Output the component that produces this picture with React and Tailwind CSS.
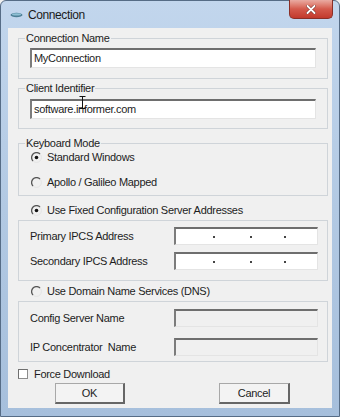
import React from "react";

function Radio({ checked }) {
  return (
    <svg width="11" height="11" viewBox="0 0 11 11" className="shrink-0">
      <path d="M9 2 A4.95 4.95 0 0 1 2 9" fill="none" stroke="#e4e4e4" strokeWidth="1" />
      <path d="M2 9 A4.95 4.95 0 0 1 9 2" fill="none" stroke="#555" strokeWidth="1.3" />
      {checked ? <circle cx="5.5" cy="5.5" r="1.8" fill="#111" /> : null}
    </svg>
  );
}

function Field({ className = "", children }) {
  return (
    <div
      className={`relative flex items-center border-t-2 border-l-2 border-r border-b border-t-[#6e6e6e] border-l-[#7c7c7c] border-r-[#e4e4e4] border-b-[#e4e4e4] ${className}`}
    >
      {children}
    </div>
  );
}

function IpField() {
  return (
    <Field className="h-[18px] w-[144px] bg-white">
      <div className="ml-[37px] h-[2px] w-[2px] bg-[#444]" />
      <div className="ml-[35px] h-[2px] w-[2px] bg-[#444]" />
      <div className="ml-[32px] h-[2px] w-[2px] bg-[#444]" />
    </Field>
  );
}

function Button({ className = "", children }) {
  return (
    <div
      className={`flex h-[21px] items-center justify-center border border-[#a8a8a8] border-r-2 border-b-2 border-r-[#666] border-b-[#666] bg-[#f3f3f3] ${className}`}
    >
      {children}
    </div>
  );
}

export default function App() {
  return (
    <div className="h-[417px] w-[340px] overflow-hidden bg-[#f0f0f0] font-['Liberation_Sans',Arial,sans-serif] text-[11px] leading-[13px] tracking-[-0.3px] text-[#1d1d1d]">
      <div className="flex h-full flex-col rounded-t-[6px] border border-[#566c86] bg-gradient-to-b from-[#c2d6ed] via-[#b2c9e3] to-[#a6bfdc] px-[7px] pb-[8px]">
        {/* title bar */}
        <div className="flex h-[27px] shrink-0">
          <div className="flex items-center">
            <svg width="13" height="6" viewBox="0 0 13 6" className="ml-[2px]">
              <ellipse cx="6.5" cy="3" rx="6" ry="2.2" fill="#4d7f96" />
              <ellipse cx="6.5" cy="2.4" rx="4.5" ry="1.1" fill="#8fc0d4" />
            </svg>
            <span className="ml-[5px] text-[12px] leading-[14px] tracking-[-0.4px] text-[#1b1b1b]">Connection</span>
          </div>
          <div className="-mr-[1px] -mt-[1px] ml-auto flex h-[19px] w-[44px] items-center justify-center rounded-b-[5px] border border-t-0 border-[#8a2f27] bg-gradient-to-b from-[#e9aba2] via-[#d45a4c] to-[#c2392c]">
            <svg width="10" height="9" viewBox="0 0 10 9">
              <path d="M1.5 1 L8.5 8 M8.5 1 L1.5 8" stroke="#6b1c16" strokeWidth="3" strokeLinecap="round" />
              <path d="M1.5 1 L8.5 8 M8.5 1 L1.5 8" stroke="#fff" strokeWidth="2" strokeLinecap="round" />
            </svg>
          </div>
        </div>

        {/* client area */}
        <div className="flex flex-1 flex-col bg-[#f0f0f0] pl-[10px] pr-[4px]">
          <fieldset className="mt-[4px] border border-[#cfd4d9] px-[11px] pt-[3px] pb-[10px]">
            <legend className="-ml-[5px] px-[1px]">Connection Name</legend>
            <Field className="h-[20px] w-full bg-white pl-[2px]">MyConnection</Field>
          </fieldset>

          <fieldset className="mt-[3px] border border-[#cfd4d9] px-[11px] pt-[4px] pb-[9px]">
            <legend className="-ml-[5px] px-[1px]">Client Identifier</legend>
            <Field className="h-[20px] w-full bg-white pl-[2px]">
              software.informer.com
              <svg width="7" height="13" viewBox="0 0 7 13" className="absolute left-[47px] top-[-5px]">
                <path d="M0.5 0.5 H6.5 M0.5 12.5 H6.5 M3.5 0.5 V12.5" stroke="#111" strokeWidth="1" fill="none" />
              </svg>
            </Field>
          </fieldset>

          <fieldset className="mt-[8px] border border-[#cfd4d9] px-[11px] pt-0 pb-[6px]">
            <legend className="-ml-[5px] px-[1px]">Keyboard Mode</legend>
            <div className="ml-[1px] flex h-[14px] items-center gap-[5px]">
              <Radio checked />
              <span>Standard Windows</span>
            </div>
            <div className="ml-[1px] mt-[11px] flex h-[14px] items-center gap-[5px]">
              <Radio />
              <span>Apollo / Galileo Mapped</span>
            </div>
          </fieldset>

          <div className="ml-[13px] mt-[7px] flex h-[14px] items-center gap-[5px]">
            <Radio checked />
            <span>Use Fixed Configuration Server Addresses</span>
          </div>

          <div className="mt-[3px] flex flex-col gap-[7px] border border-[#cfd4d9] pl-[11px] pr-[9px] pt-[6px] pb-[10px]">
            <div className="flex items-center justify-between">
              <span>Primary IPCS Address</span>
              <IpField />
            </div>
            <div className="flex items-center justify-between">
              <span>Secondary IPCS Address</span>
              <IpField />
            </div>
          </div>

          <div className="ml-[13px] mt-[3px] flex h-[14px] items-center gap-[5px]">
            <Radio />
            <span>Use Domain Name Services (DNS)</span>
          </div>

          <div className="mt-[3px] flex flex-col gap-[11px] border border-[#cfd4d9] pl-[11px] pr-[9px] pt-[7px] pb-[5px]">
            <div className="flex items-center justify-between">
              <span>Config Server Name</span>
              <Field className="h-[18px] w-[144px] bg-[#f0f0f0]" />
            </div>
            <div className="flex items-center justify-between">
              <span>IP Concentrator&nbsp; Name</span>
              <Field className="h-[18px] w-[144px] bg-[#f0f0f0]" />
            </div>
          </div>

          <div className="mt-[5px] flex h-[14px] items-center gap-[6px]">
            <div className="h-[10px] w-[10px] border border-[#8c8c8c] border-t-[#6f6f6f] border-l-[#6f6f6f] bg-white" />
            <span>Force Download</span>
          </div>

          <div className="mt-[2px] flex">
            <Button className="ml-[37px] w-[70px]">OK</Button>
            <Button className="ml-[94px] w-[71px]">Cancel</Button>
          </div>
        </div>
      </div>
    </div>
  );
}
